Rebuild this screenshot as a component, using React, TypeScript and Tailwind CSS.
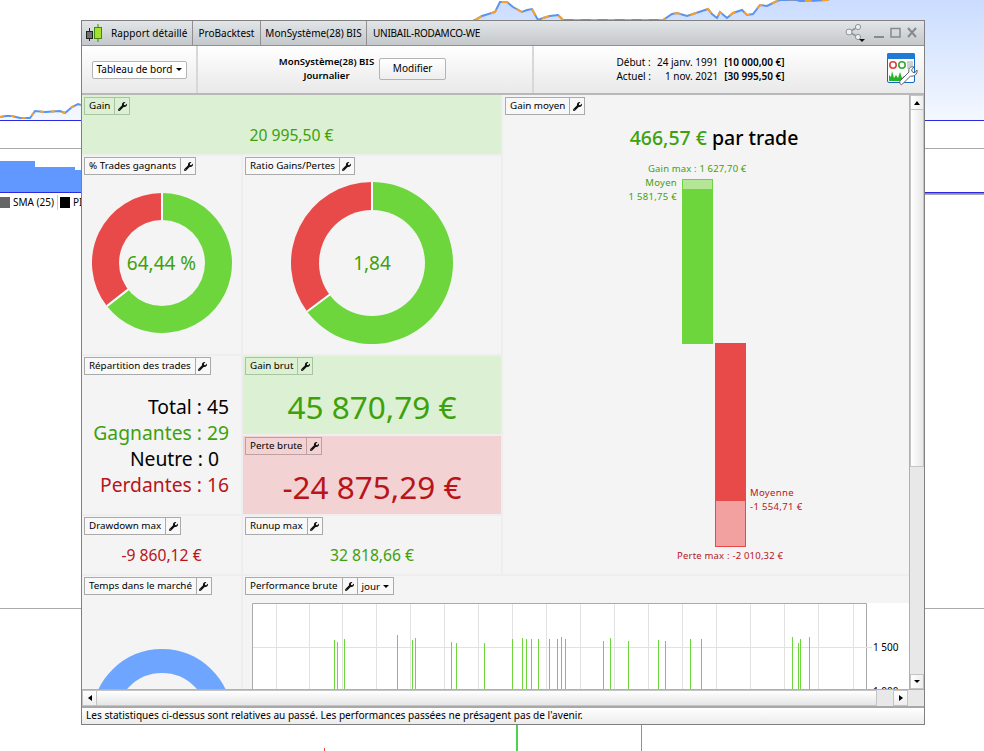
import { FaWrench } from "react-icons/fa";

const GREEN = "text-[#3ea10c]";
const RED = "text-[#b8141a]";

// tops of the daily bars, absolute page coordinates
const perfBars: [number, number][] = [
  [334, 640], [337, 642], [344, 639], [397, 635], [412, 640], [415, 638], [451, 642], [456, 643], [484, 643],
  [512, 639], [522, 638], [526, 639], [531, 639], [538, 639], [549, 639], [557, 639], [561, 637], [565, 639],
  [603, 641], [610, 638], [628, 641], [658, 640], [665, 641], [690, 639], [701, 639],
  [792, 637], [798, 643], [800, 639], [809, 637],
];
const gridX = [276, 309, 342, 376, 410, 444, 478, 512, 546, 580, 614, 648, 682, 716, 750, 784, 818, 853];

const leftCurve = "0,117 6,116 12,116 20,118 30,118 35,111 45,112 60,111 65,113 72,107 78,104 81,105";
const topCurve =
  "460,27 475,20 482,16 495,12 500,2 507,2 513,7 522,12 527,10 532,9 538,20 543,18 550,16 558,15 563,20 575,20 630,20 663,20 672,14 677,13 687,16 693,14 708,9 712,14 717,18 720,12 727,18 733,13 742,10 747,15 753,14 760,5 767,6 775,2 780,0 793,-1 800,1 810,1 827,0 835,-3";

function Tag({ label, border = "border-[#aaaaaa]", bg = "bg-[#f8f8f8]", jour = false }: { label: string; border?: string; bg?: string; jour?: boolean }) {
  return (
    <div className={`flex h-[18px] w-fit items-stretch border ${border} ${bg} text-[9.8px] leading-[15px] text-black`}>
      <span className="whitespace-nowrap px-[4px]">{label}</span>
      <span className={`flex w-[15px] items-center justify-center border-l ${border}`}>
        <FaWrench className="h-[9px] w-[9px] text-[#111]" />
      </span>
      {jour && (
        <span className={`flex items-center gap-[3px] border-l ${border} px-[4px]`}>
          jour
          <Caret />
        </span>
      )}
    </div>
  );
}

function Caret() {
  return <span className="inline-block h-0 w-0 border-x-[3.5px] border-t-[3.5px] border-x-transparent border-t-black" />;
}

function Donut({ size, inner, value, label }: { size: number; inner: number; value: number; label: string }) {
  const c = size / 2;
  const r = c;
  const a = value * Math.PI * 2;
  const ex = c + r * Math.sin(a);
  const ey = c - r * Math.cos(a);
  return (
    <div className="relative" style={{ width: size, height: size }}>
      <svg width={size} height={size} className="block">
        <path d={`M${c} ${c}L${c} 0A${r} ${r} 0 1 1 ${ex} ${ey}Z`} fill="#6dd63d" />
        <path d={`M${c} ${c}L${ex} ${ey}A${r} ${r} 0 0 1 ${c} 0Z`} fill="#e84a4a" />
        <path d={`M${c} 0L${c} ${c}L${ex} ${ey}`} fill="none" stroke="#ffffff" strokeWidth="2" />
        <circle cx={c} cy={c} r={inner} fill="#f4f4f4" />
      </svg>
      <div className={`absolute inset-0 flex items-center justify-center text-[19px] ${GREEN}`}>{label}</div>
    </div>
  );
}

function Backdrop() {
  return (
    <svg width="984" height="751" className="absolute left-0 top-0">
      <defs>
        <linearGradient id="area" x1="0" y1="0" x2="0" y2="120" gradientUnits="userSpaceOnUse">
          <stop offset="0" stopColor="#cadcff" />
          <stop offset="1" stopColor="#f4f8ff" />
        </linearGradient>
      </defs>
      <polygon points={`${leftCurve} 81,120 0,120`} fill="url(#area)" />
      <polygon points={`${topCurve} 984,-3 984,120 460,120`} fill="url(#area)" />
      <polyline points={leftCurve} fill="none" stroke="#5b93f0" strokeWidth="2" />
      <polyline points={leftCurve} fill="none" stroke="#f5a22d" strokeWidth="2" strokeDasharray="4 7" />
      <polyline points={topCurve} fill="none" stroke="#5b93f0" strokeWidth="2" />
      <polyline points={topCurve} fill="none" stroke="#f5a22d" strokeWidth="2" strokeDasharray="7 10" />
      <rect x="0" y="120" width="984" height="1" fill="#2a2ae0" />
      <rect x="0" y="148" width="984" height="1" fill="#aaaaaa" />
      <polygon points="0,161 35,161 35,167 75,167 75,170 81,170 81,192 0,192" fill="#6098ff" />
      <rect x="0" y="192" width="984" height="1" fill="#2a2ae0" />
      <rect x="925" y="193" width="59" height="1" fill="#5b93f0" />
      <rect x="925" y="194" width="59" height="1" fill="#aaaaaa" />
      <rect x="0" y="197" width="10" height="11" fill="#666666" />
      <rect x="57" y="195" width="1" height="15" fill="#cccccc" />
      <rect x="60" y="197" width="10" height="11" fill="#000000" />
      <rect x="0" y="608" width="984" height="1" fill="#aaaaaa" />
      <rect x="516" y="725" width="2" height="26" fill="#4fd04f" />
      <rect x="641" y="725" width="1" height="26" fill="#e07070" />
      <rect x="324" y="748" width="1" height="3" fill="#e84a4a" />
      <text x="13" y="206" fontSize="10" fill="#000">SMA (25)</text>
      <text x="73" y="206" fontSize="10" fill="#000">PI</text>
    </svg>
  );
}

function CandleIcon() {
  return (
    <svg width="16" height="18" viewBox="0 0 16 18">
      <path d="M3.5 4v13" stroke="#222" strokeWidth="1" />
      <rect x="0.5" y="7.5" width="6" height="7" fill="#6c7478" stroke="#222" />
      <path d="M12 0v18" stroke="#3c8a10" strokeWidth="1" />
      <rect x="8.5" y="3.5" width="7" height="11" fill="#a6e22c" stroke="#3c8a10" />
    </svg>
  );
}

function ShareIcon() {
  return (
    <svg width="21" height="18" viewBox="0 0 21 18">
      <path d="M4 8L13 3M4 8L13 13" stroke="#8e9498" strokeWidth="1.5" />
      <circle cx="4" cy="8" r="3" fill="#eef0f1" stroke="#8e9498" />
      <circle cx="13" cy="3" r="2.6" fill="#eef0f1" stroke="#8e9498" />
      <circle cx="13" cy="13" r="2.6" fill="#eef0f1" stroke="#8e9498" />
      <path d="M14 15h6l-3 3z" fill="#111" />
    </svg>
  );
}

function WindowButtons() {
  return (
    <svg width="44" height="12" viewBox="0 0 44 12">
      <rect x="0" y="9" width="10" height="2" fill="#858a8e" />
      <rect x="17" y="1.5" width="9" height="8.5" fill="none" stroke="#858a8e" strokeWidth="1.5" />
      <path d="M34 1l8 9M42 1l-8 9" stroke="#858a8e" strokeWidth="2" />
    </svg>
  );
}

function DashboardIcon() {
  return (
    <svg width="30" height="31" viewBox="0 0 30 31" className="overflow-visible">
      <rect x="0.5" y="0.5" width="27" height="29" rx="1.5" fill="#ffffff" stroke="#1666c4" />
      <rect x="0" y="0" width="28" height="6" rx="1.5" fill="#1f7ad6" />
      <circle cx="6" cy="12" r="3.2" fill="none" stroke="#e0403c" strokeWidth="1.6" />
      <circle cx="15" cy="12" r="3.2" fill="none" stroke="#35a835" strokeWidth="1.6" />
      <path d="M20 9h6M20 11h6M20 13h6M20 15h6" stroke="#9aa4ad" strokeWidth="1" />
      <path d="M2 28V22l2 2 1-6 2 7 2-3 2 3 2-6 2 6 2-2v5z" fill="#25b525" />
      <path d="M14 27l8-8c-1-3 1-6 5-5l-2.500 3 1 2 2 1 2.500-3c1 4-3 7-6.500 6l-8 8c-1.500 2-4-1-2-4z" fill="#ffffff" stroke="#5a6268" />
    </svg>
  );
}

function VScrollbar() {
  return (
    <div className="flex w-[15px] flex-col border-l border-[#b0b0b0] bg-[#e8e8e8]">
      <div className="flex h-[15px] items-center justify-center border border-[#c4c4c4] bg-gradient-to-r from-[#ffffff] to-[#eeeeee]">
        <span className="h-0 w-0 border-x-[3.5px] border-b-[4px] border-x-transparent border-b-black" />
      </div>
      <div className="h-[357px] border-x border-b border-[#c4c4c4] bg-gradient-to-r from-[#ffffff] to-[#e8e8e8]" />
      <div className="flex-1" />
      <div className="flex h-[15px] items-center justify-center border border-[#c4c4c4] bg-gradient-to-r from-[#ffffff] to-[#eeeeee]">
        <Caret />
      </div>
    </div>
  );
}

function HScrollbar() {
  return (
    <div className="flex h-[16px] bg-[#e8e8e8]">
      <div className="flex w-[15px] items-center justify-center border border-[#c4c4c4] bg-gradient-to-b from-[#ffffff] to-[#eeeeee]">
        <span className="h-0 w-0 border-y-[3.5px] border-r-[4px] border-y-transparent border-r-black" />
      </div>
      <div className="w-[780px] border-y border-r border-[#c4c4c4] bg-gradient-to-b from-[#ffffff] to-[#e6e6e6]" />
      <div className="w-[16px]" />
      <div className="flex w-[15px] items-center justify-center border border-[#c4c4c4] bg-gradient-to-b from-[#ffffff] to-[#eeeeee]">
        <span className="h-0 w-0 border-y-[3.5px] border-l-[4px] border-y-transparent border-l-black" />
      </div>
      <div className="flex-1" />
    </div>
  );
}

function GainMoyen() {
  return (
    <div className="relative h-[479px] bg-[#f4f4f4] p-[2px]">
      <Tag label="Gain moyen" />
      <div className="mt-[8px] pl-[16px] text-center text-[19.5px] font-medium leading-[30px] text-black">
        <span className={GREEN}>466,57 €</span> par trade
      </div>
      <div className={`absolute left-[145px] top-[67px] text-[9.5px] tracking-[0.15px] ${GREEN}`}>Gain max : 1 627,70 €</div>
      <div className={`absolute right-[232px] top-[81px] text-right text-[9.5px] leading-[14px] tracking-[0.3px] ${GREEN}`}>
        Moyen
        <br />
        1 581,75 €
      </div>
      <div className="absolute left-[179px] top-[84px] w-[31px] border border-[#6dd63d] bg-[#6dd63d]">
        <div className="h-[9px] bg-[#b5e597]" />
        <div className="h-[154px]" />
      </div>
      <div className="absolute left-[212px] top-[248px] w-[31px] border border-[#e84a4a] bg-[#e84a4a]">
        <div className="h-[157px]" />
        <div className="h-[45px] bg-[#f2a0a0]" />
      </div>
      <div className={`absolute left-[247px] top-[391px] text-[9.5px] leading-[14px] tracking-[0.35px] ${RED}`}>
        Moyenne
        <br />
        -1 554,71 €
      </div>
      <div className={`absolute left-[174px] top-[454px] text-[9.5px] tracking-[0.2px] ${RED}`}>Perte max : -2 010,32 €</div>
    </div>
  );
}

function PerfChart() {
  return (
    <svg width="657" height="86" className="mt-[8px] ml-[9px] block bg-white">
      <g transform="translate(-252 -603)">
        <path d="M252.5 700V603.5H866.5V700" fill="none" stroke="#aaaaaa" />
        {gridX.map((x) => (
          <rect key={x} x={x} y={604} width={1} height={96} fill="#e2e2e2" />
        ))}
        <rect x={253} y={647} width={619} height={1} fill="#e2e2e2" />
        {perfBars.map(([x, y]) => (
          <rect key={x} x={x} y={y} width={1} height={60} fill="#6dd63d" />
        ))}
        <text x={873} y={651} fontSize="10" fill="#000">1 500</text>
        <text x={873} y={695} fontSize="10" fill="#000">1 000</text>
      </g>
    </svg>
  );
}

export default function App() {
  return (
    <div className="relative h-[751px] w-[984px] overflow-hidden bg-white font-['Noto_Sans',sans-serif]">
      <Backdrop />
      <div className="absolute left-[81px] top-[20px] flex h-[705px] w-[844px] flex-col border-x border-y border-[#808080] bg-[#f4f4f4] text-black">
        {/* title bar */}
        <div className="flex h-[25px] items-center border-b border-[#909090] bg-gradient-to-b from-[#e2e6e8] to-[#c4c8cb] text-[10px]">
          <div className="flex h-full w-[111px] items-center border-r border-[#909090] pl-[4px]">
            <CandleIcon />
            <span className="ml-[9px] whitespace-nowrap tracking-[0.1px]">Rapport détaillé</span>
          </div>
          <div className="flex h-full w-[68px] items-center justify-center border-r border-[#909090]">ProBacktest</div>
          <div className="flex h-full w-[106px] items-center justify-center whitespace-nowrap border-r border-[#909090]">MonSystème(28) BIS</div>
          <div className="ml-[6px] tracking-[-0.25px]">UNIBAIL-RODAMCO-WE</div>
          <div className="ml-auto mr-[6px] flex items-center gap-[8px]">
            <ShareIcon />
            <WindowButtons />
          </div>
        </div>
        {/* toolbar */}
        <div className="flex h-[49px] items-stretch border-b-2 border-[#b8b8b8] bg-gradient-to-b from-[#ffffff] to-[#e9e9e9] text-[10px]">
          <div className="flex w-[116px] items-center border-r-2 border-[#d8d8d8] pl-[10px]">
            <div className="flex h-[18px] w-[95px] items-center justify-center gap-[4px] rounded-[2px] border border-[#b4b4b4] bg-white whitespace-nowrap">
              Tableau de bord
              <Caret />
            </div>
          </div>
          <div className="flex w-[336px] items-center justify-center gap-[5px] border-r-2 border-[#d8d8d8] pr-[5px] pb-[2px]">
            <div className="text-center text-[9.6px] font-semibold leading-[14px] whitespace-nowrap">
              MonSystème(28) BIS
              <br />
              Journalier
            </div>
            <div className="flex h-[22px] w-[67px] items-center justify-center rounded-[2px] border border-[#b4b4b4] bg-gradient-to-b from-[#ffffff] to-[#eeeeee]">Modifier</div>
          </div>
          <div className="grid flex-1 grid-cols-[auto_auto_auto] content-center justify-center gap-x-[6px] pr-[20px] pb-[2px] leading-[14px] whitespace-nowrap">
            <span>Début :</span>
            <span className="text-right">24 janv. 1991</span>
            <span className="font-semibold">[10 000,00 €]</span>
            <span>Actuel :</span>
            <span className="text-right">1 nov. 2021</span>
            <span className="font-semibold">[30 995,50 €]</span>
          </div>
          <div className="flex w-[37px] items-center pb-[2px]">
            <DashboardIcon />
          </div>
        </div>
        {/* scrolling report */}
        <div className="flex h-[594px] overflow-hidden bg-[#eeeeee]">
          <div className="grid h-full w-[827px] grid-cols-[159px_258px_406px] grid-rows-[59px_198px_158px_58px_113px] gap-[2px]">
            <div className="col-span-2 bg-[#dcf0d3] p-[2px]">
              <Tag label="Gain" border="border-[#a8c4a0]" bg="bg-transparent" />
              <div className={`mt-[9px] text-center text-[15.7px] ${GREEN}`}>20 995,50 €</div>
            </div>
            <div className="row-span-4">
              <GainMoyen />
            </div>
            <div className="bg-[#f4f4f4] px-[2px] pt-[1px]">
              <Tag label="% Trades gagnants" />
              <div className="mt-[18px] flex justify-center">
                <Donut size={140} inner={43} value={0.6444} label="64,44 %" />
              </div>
            </div>
            <div className="bg-[#f4f4f4] px-[2px] pt-[1px]">
              <Tag label="Ratio Gains/Pertes" />
              <div className="mt-[7px] flex justify-center">
                <Donut size={162} inner={53} value={0.648} label="1,84" />
              </div>
            </div>
            <div className="bg-[#f4f4f4] px-[2px] pt-[1px]">
              <Tag label="Répartition des trades" />
              <div className="mt-[19px] pr-[10px] text-right text-[19.3px] leading-[26px]">
                <div>Total : 45</div>
                <div className={GREEN}>Gagnantes : 29</div>
                <div>Neutre : 0&nbsp;&nbsp;</div>
                <div className={RED}>Perdantes : 16</div>
              </div>
            </div>
            <div className="flex flex-col gap-[2px]">
              <div className="h-[78px] bg-[#dcf0d3] px-[2px] pt-[1px]">
                <Tag label="Gain brut" border="border-[#a8c4a0]" bg="bg-transparent" />
                <div className={`mt-[10px] text-center text-[31.5px] leading-[44px] ${GREEN}`}>45 870,79 €</div>
              </div>
              <div className="h-[78px] bg-[#f2d2d2] px-[2px] pt-[1px]">
                <Tag label="Perte brute" border="border-[#bfa0a0]" bg="bg-transparent" />
                <div className={`mt-[10px] text-center text-[31.5px] leading-[44px] ${RED}`}>-24 875,29 €</div>
              </div>
            </div>
            <div className="bg-[#f4f4f4] px-[2px] pt-[1px]">
              <Tag label="Drawdown max" />
              <div className={`mt-[9px] text-center text-[15.7px] ${RED}`}>-9 860,12 €</div>
            </div>
            <div className="bg-[#f4f4f4] px-[2px] pt-[1px]">
              <Tag label="Runup max" />
              <div className={`mt-[9px] text-center text-[15.7px] ${GREEN}`}>32 818,66 €</div>
            </div>
            <div className="overflow-hidden bg-[#f4f4f4] px-[2px] pt-[1px]">
              <Tag label="Temps dans le marché" />
              <svg width="140" height="140" className="mt-[54px] ml-[8px] block">
                <circle cx="70" cy="70" r="58" fill="none" stroke="#6ea6ff" strokeWidth="24" />
              </svg>
            </div>
            <div className="col-span-2 overflow-hidden bg-[#f4f4f4] pt-[1px]">
              <div className="pl-[2px]">
                <Tag label="Performance brute" jour />
              </div>
              <PerfChart />
            </div>
          </div>
          <VScrollbar />
        </div>
        <div className="border-t border-[#b0b0b0]">
          <HScrollbar />
        </div>
        <div className="flex flex-1 items-center border-t-2 border-[#a8a8a8] bg-gradient-to-b from-[#ffffff] to-[#ececec] pl-[4px] text-[10.1px]">
          Les statistiques ci-dessus sont relatives au passé. Les performances passées ne présagent pas de l'avenir.
        </div>
      </div>
    </div>
  );
}
